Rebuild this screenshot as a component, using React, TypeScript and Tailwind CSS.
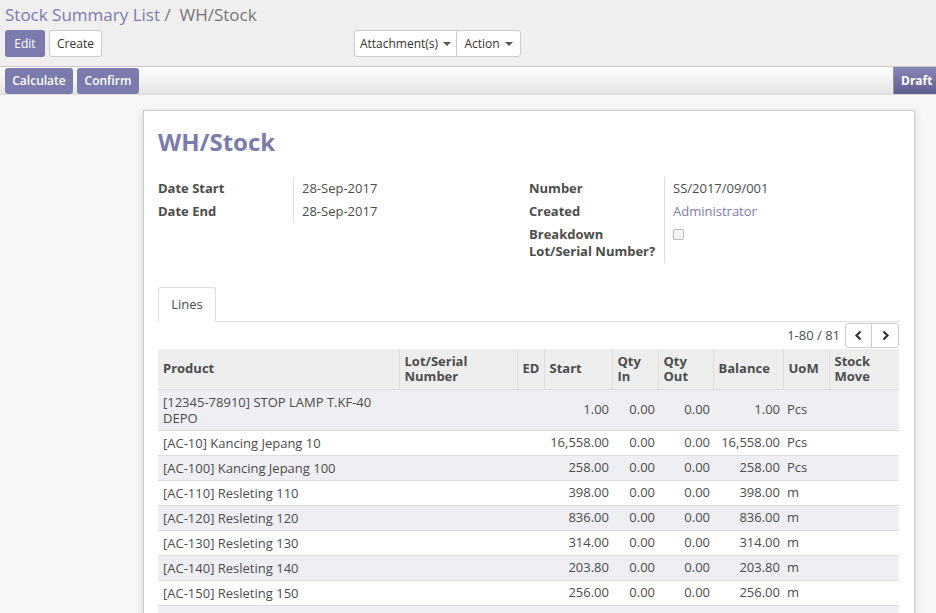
import React from "react";

type Line = {
  product: string[];
  start: string;
  qin: string;
  qout: string;
  balance: string;
  uom: string;
};

const lines: Line[] = [
  { product: ["[12345-78910] STOP LAMP T.KF-40", "DEPO"], start: "1.00", qin: "0.00", qout: "0.00", balance: "1.00", uom: "Pcs" },
  { product: ["[AC-10] Kancing Jepang 10"], start: "16,558.00", qin: "0.00", qout: "0.00", balance: "16,558.00", uom: "Pcs" },
  { product: ["[AC-100] Kancing Jepang 100"], start: "258.00", qin: "0.00", qout: "0.00", balance: "258.00", uom: "Pcs" },
  { product: ["[AC-110] Resleting 110"], start: "398.00", qin: "0.00", qout: "0.00", balance: "398.00", uom: "m" },
  { product: ["[AC-120] Resleting 120"], start: "836.00", qin: "0.00", qout: "0.00", balance: "836.00", uom: "m" },
  { product: ["[AC-130] Resleting 130"], start: "314.00", qin: "0.00", qout: "0.00", balance: "314.00", uom: "m" },
  { product: ["[AC-140] Resleting 140"], start: "203.80", qin: "0.00", qout: "0.00", balance: "203.80", uom: "m" },
  { product: ["[AC-150] Resleting 150"], start: "256.00", qin: "0.00", qout: "0.00", balance: "256.00", uom: "m" },
  { product: ["[AC-160] Resleting 160"], start: "120.00", qin: "0.00", qout: "0.00", balance: "120.00", uom: "m" },
];

function Caret() {
  return <span className="ml-[5px] inline-block h-0 w-0 border-x-[4px] border-t-[4px] border-x-transparent border-t-[#555] align-middle" />;
}

function Field({ label, value, link }: { label: React.ReactNode; value: React.ReactNode; link?: boolean }) {
  return (
    <div className="flex">
      <div className="w-[135px] shrink-0 py-[3px] pr-2 font-bold leading-[17px]">{label}</div>
      <div className={`border-l border-[#ddd] py-[3px] pl-[8px] leading-[17px] ${link ? "text-[#7c7bad]" : ""}`}>{value}</div>
    </div>
  );
}

export default function App() {
  return (
    <div className="min-h-screen bg-[#f7f7f7] font-['Open_Sans',sans-serif] text-[13px] text-[#4c4c4c]">
      {/* control panel */}
      <div className="h-[67px] border-b border-[#c8c8c8] bg-[#f0eeee] px-[5px]">
        <div className="h-[30px] pt-[3px] text-[17px] leading-[24px]">
          <span className="text-[#7c7bad]">Stock Summary List</span>
          <span className="text-[#777]"> /&nbsp; WH/Stock</span>
        </div>
        <div className="flex items-center">
          <button className="h-[27px] w-[40px] rounded-[3px] bg-[#7c7bad] text-[12px] text-white">Edit</button>
          <button className="ml-[4px] h-[27px] w-[53px] rounded-[3px] border border-[#ccc] bg-white text-[12px] text-[#333]">Create</button>
          <div className="ml-[252px] flex h-[27px] rounded-[3px] border border-[#ccc] bg-white text-[12px] text-[#333]">
            <button className="w-[102px] border-r border-[#ccc]">Attachment(s)<Caret /></button>
            <button className="w-[63px]">Action<Caret /></button>
          </div>
        </div>
      </div>

      {/* statusbar */}
      <div className="flex h-[28px] items-center justify-between border-b border-[#ddd] bg-gradient-to-b from-white to-[#e4e4e4] pl-[5px]">
        <div className="flex gap-[4px]">
          <button className="h-[26px] w-[68px] rounded-[3px] bg-[#7c7bad] text-[12px] font-semibold text-white">Calculate</button>
          <button className="h-[26px] w-[62px] rounded-[3px] bg-[#7c7bad] text-[12px] font-semibold text-white">Confirm</button>
        </div>
        <div className="flex h-[27px] w-[43px] items-center border-l border-[#999] bg-gradient-to-b from-[#8887b5] to-[#5f5d8f] pl-[7px] text-[12px] font-bold text-white">
          Draft
        </div>
      </div>

      {/* sheet */}
      <div className="pt-[15px]">
        <div className="ml-[143px] w-[772px] border border-[#ccc] bg-white pb-10 pl-[14px] pr-[15px] pt-[13px] shadow-[0_2px_8px_rgba(0,0,0,0.15)]">
          <h1 className="text-[24px] font-bold leading-[36px] text-[#7c7bad]">WH/Stock</h1>

          <div className="mt-[17px] flex">
            <div className="w-[371px]">
              <Field label="Date Start" value="28-Sep-2017" />
              <Field label="Date End" value="28-Sep-2017" />
            </div>
            <div className="flex-1">
              <Field label="Number" value="SS/2017/09/001" />
              <Field label="Created" value="Administrator" link />
              <Field
                label={
                  <>
                    Breakdown
                    <br />
                    Lot/Serial Number?
                  </>
                }
                value={<span className="mt-[3px] block h-[11px] w-[11px] rounded-[2px] border border-[#bbb] bg-[#f4f4f4]" />}
              />
            </div>
          </div>

          {/* tabs */}
          <div className="mt-[24px] flex border-b border-[#ddd]">
            <div className="-mb-px h-[35px] w-[58px] rounded-t-[3px] border border-b-white border-[#ddd] bg-white text-center leading-[33px]">
              Lines
            </div>
          </div>

          {/* pager */}
          <div className="mt-[1px] flex items-center justify-end">
            <span className="mr-[5px]">1-80 / 81</span>
            <div className="flex h-[25px] rounded-[3px] border border-[#ccc]">
              <button className="flex w-[26px] items-center justify-center border-r border-[#ccc]">
                <svg width="9" height="11" viewBox="0 0 9 11"><path d="M6.5 1.5 2.5 5.5l4 4" fill="none" stroke="#333" strokeWidth="2.2" /></svg>
              </button>
              <button className="flex w-[26px] items-center justify-center">
                <svg width="9" height="11" viewBox="0 0 9 11"><path d="M2.5 1.5l4 4-4 4" fill="none" stroke="#333" strokeWidth="2.2" /></svg>
              </button>
            </div>
          </div>

          {/* table */}
          <table className="mt-[1px] w-full table-fixed border-collapse">
            <colgroup>
              <col className="w-[241px]" />
              <col className="w-[118px]" />
              <col className="w-[27px]" />
              <col className="w-[68px]" />
              <col className="w-[46px]" />
              <col className="w-[55px]" />
              <col className="w-[70px]" />
              <col className="w-[46px]" />
              <col />
            </colgroup>
            <thead>
              <tr className="h-[40px] bg-[#eeeeee] text-left font-bold leading-[15px]">
                <th className="border-r border-[#ddd] px-[5px]">Product</th>
                <th className="border-r border-[#ddd] px-[5px]">Lot/Serial Number</th>
                <th className="border-r border-[#ddd] px-[5px]">ED</th>
                <th className="border-r border-[#ddd] px-[5px]">Start</th>
                <th className="border-r border-[#ddd] px-[5px]">Qty In</th>
                <th className="border-r border-[#ddd] px-[5px]">Qty Out</th>
                <th className="border-r border-[#ddd] px-[5px]">Balance</th>
                <th className="border-r border-[#ddd] px-[5px]">UoM</th>
                <th className="px-[5px]">Stock Move</th>
              </tr>
            </thead>
            <tbody>
              {lines.map((l, i) => (
                <tr key={i} className={`border-t border-[#ddd] ${i % 2 === 0 ? "bg-[#eeeef3]" : "bg-white"}`}>
                  <td className="px-[5px] py-[4px] leading-[16px]">
                    {l.product.map((p, j) => (
                      <div key={j}>{p}</div>
                    ))}
                  </td>
                  <td />
                  <td />
                  <td className="px-[3px] text-right">{l.start}</td>
                  <td className="px-[3px] text-right">{l.qin}</td>
                  <td className="px-[3px] text-right">{l.qout}</td>
                  <td className="px-[3px] text-right">{l.balance}</td>
                  <td className="px-[4px]">{l.uom}</td>
                  <td />
                </tr>
              ))}
            </tbody>
          </table>
        </div>
      </div>
    </div>
  );
}
